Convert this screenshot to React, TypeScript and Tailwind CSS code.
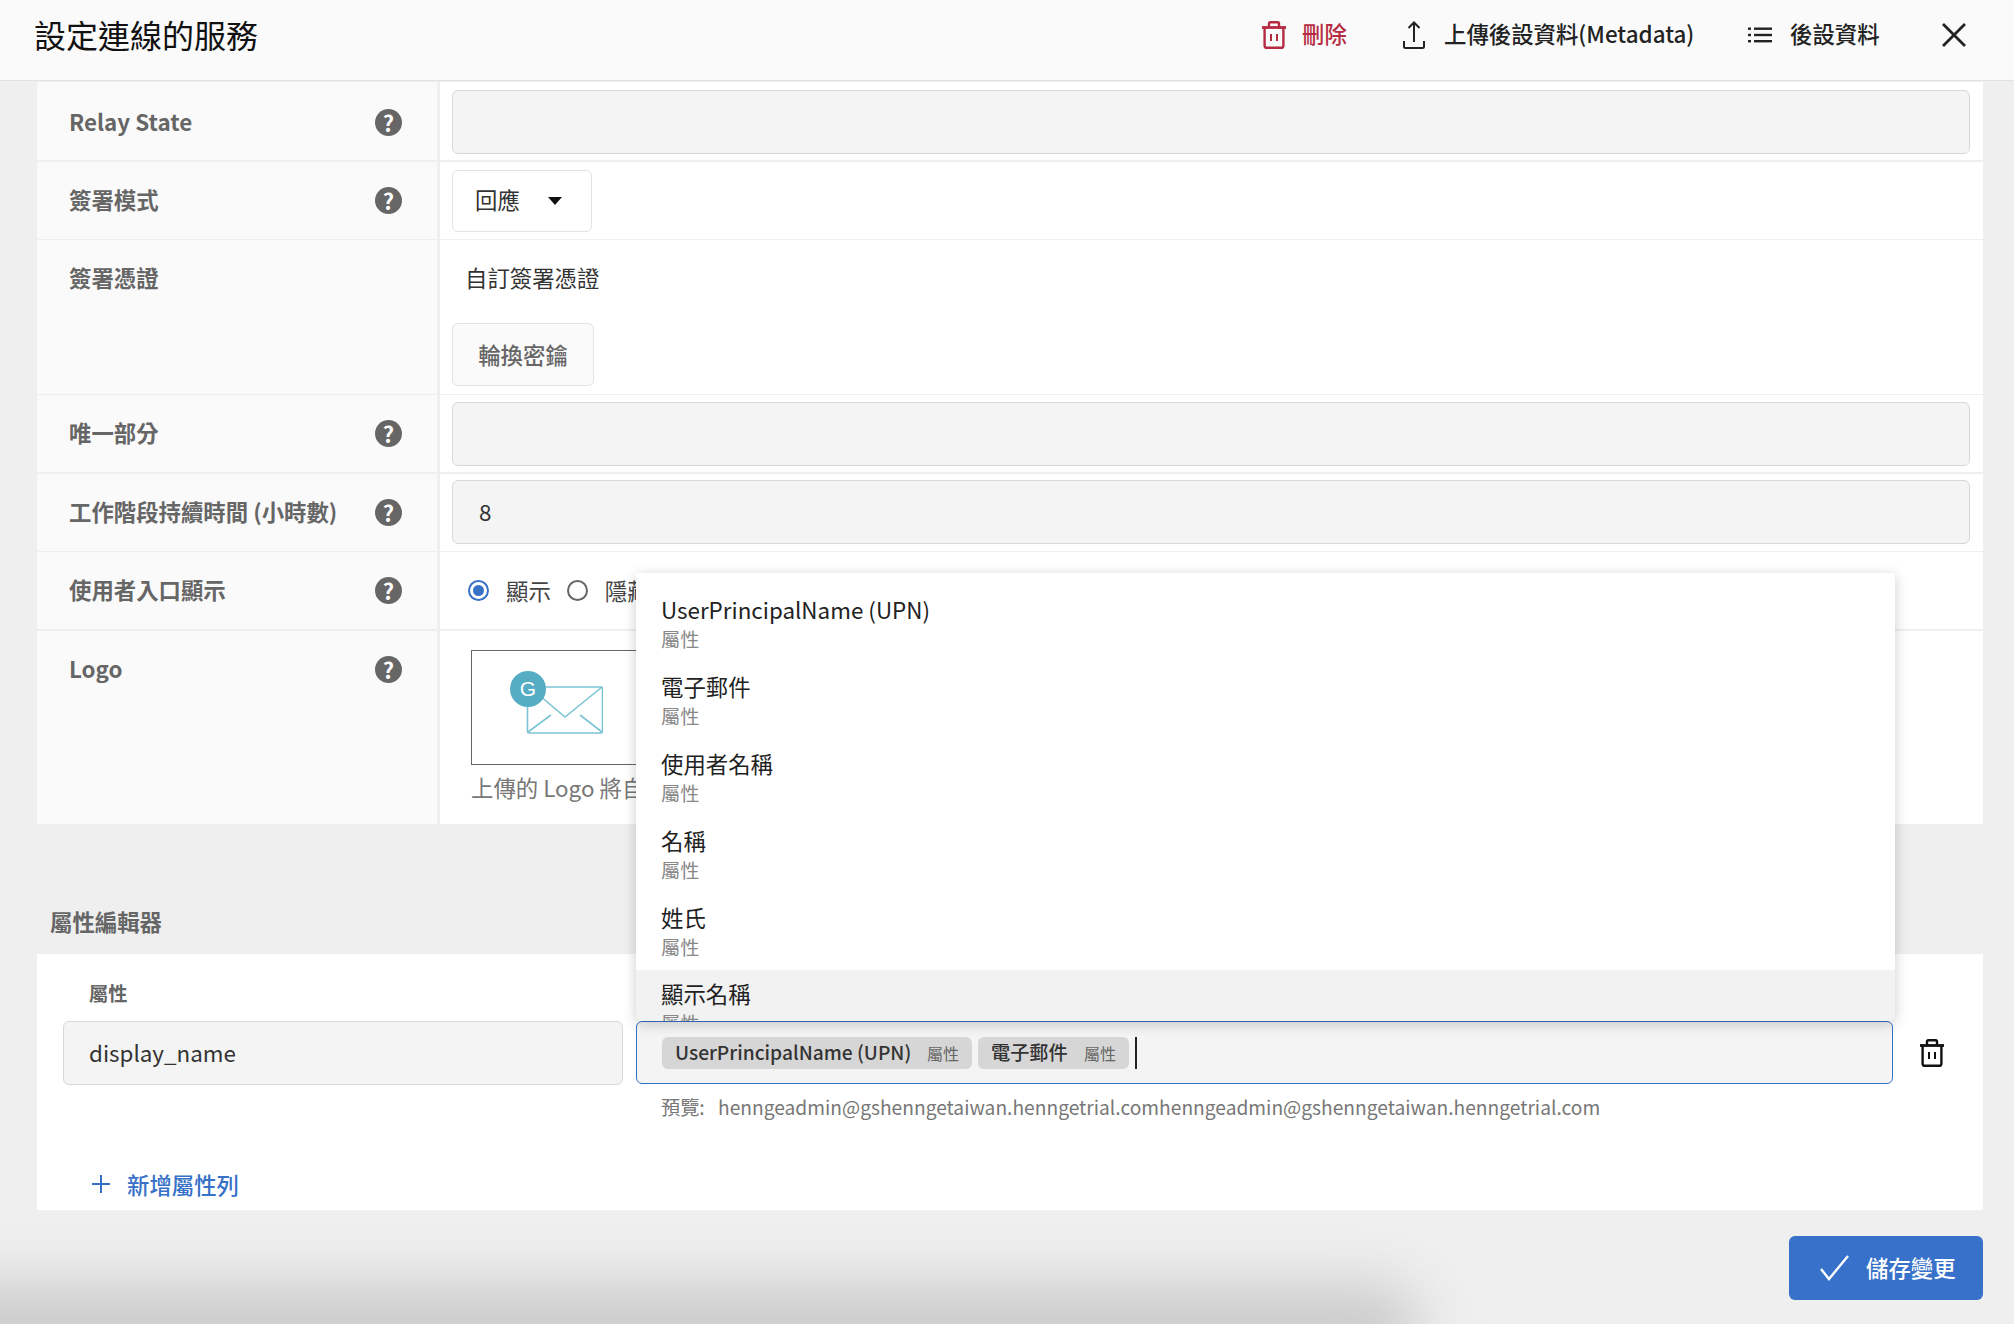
import { ReactNode } from 'react';

function TrashIcon({ className }: { className: string }) {
  return (
    <svg viewBox="0 0 26 28" fill="none" stroke="currentColor" strokeWidth="2.4" className={className}>
      <path d="M1 6.5h24" strokeWidth="2.8" />
      <path d="M8 6V2.6c0-.8.6-1.4 1.4-1.4h7.2c.8 0 1.4.6 1.4 1.4V6" />
      <path d="M3.6 7v17.4c0 1.3 1 2.4 2.4 2.4h14c1.4 0 2.4-1.1 2.4-2.4V7" />
      <path d="M10 13v7M16 13v7" strokeWidth="2" />
    </svg>
  );
}

function HelpIcon() {
  return (
    <span className="flex h-[27px] w-[27px] items-center justify-center rounded-full bg-[#666666] text-[22px] leading-none font-bold text-white">
      ?
    </span>
  );
}

function Label({ text, help = true }: { text: string; help?: boolean }) {
  return (
    <div className="flex h-[76px] items-center justify-between pr-[35px] pl-[32px]">
      <span className="text-[22.4px] font-bold whitespace-nowrap text-[#666666]">{text}</span>
      {help && <HelpIcon />}
    </div>
  );
}

function Row({ label, help, height, gap, top, first, children }: { label: string; help?: boolean; height: string; gap: string; top?: boolean; first?: boolean; children: ReactNode }) {
  return (
    <div className={`flex ${height} ${gap}`}>
      <div className={`w-[400px] shrink-0 bg-[#fafafa] ${first ? 'pt-[2px]' : ''}`}>
        <Label text={label} help={help} />
      </div>
      <div className={`ml-[3px] flex flex-1 bg-white pr-[13px] pl-[12px] ${top ? 'flex-col' : 'items-center'}`}>{children}</div>
    </div>
  );
}

function TextBox({ value }: { value?: string }) {
  return (
    <div className="flex h-[64px] w-full items-center rounded-[6px] border border-[#d8d8d8] bg-[#f4f4f4] pl-[26px] text-[22.4px] text-[#333333]">
      {value}
    </div>
  );
}

function Option({ name, active }: { name: string; active?: boolean }) {
  return (
    <div className={`h-[76.9px] shrink-0 pt-[9px] pl-[25px] ${active ? 'bg-[#f2f2f2]' : ''}`}>
      <div className="text-[22.4px] leading-[28px] text-[#222222]">{name}</div>
      <div className="mt-[2px] text-[19.2px] leading-[28px] text-[#888888]">屬性</div>
    </div>
  );
}

function Chip({ name, width }: { name: string; width: string }) {
  return (
    <div className={`flex h-[32px] items-center justify-between rounded-[6px] bg-[#d6d6d6] px-[13px] ${width}`}>
      <span className="text-[19.2px] font-medium whitespace-nowrap text-[#333333]">{name}</span>
      <span className="text-[16px] whitespace-nowrap text-[#666666]">屬性</span>
    </div>
  );
}

export default function App() {
  return (
    <div className="relative flex h-[1324px] w-[2014px] flex-col overflow-hidden bg-[#efefef] font-['Noto_Sans_CJK_TC','Noto_Sans',sans-serif]">
      {/* shadow from the window behind, bottom of the page */}
      <div className="absolute bottom-[-50px] left-[-120px] h-[90px] w-[1540px] rounded-full bg-[#cbcbcb] blur-[28px]"></div>

      <header className="z-10 flex h-[81px] shrink-0 items-center border-b border-[#e2e2e2] bg-[#fafafa] pb-[10px] pl-[34px]">
        <h1 className="w-[1227px] pb-[2px] text-[32px] leading-none font-normal text-[#111111]">設定連線的服務</h1>
        <div className="flex w-[142px] items-center text-[#b52b42]">
          <TrashIcon className="h-[28px] w-[26px]" />
          <span className="ml-[15px] pb-[2px] text-[22.4px] font-medium">刪除</span>
        </div>
        <div className="flex w-[345px] items-center text-[#222222]">
          <svg viewBox="0 0 22 28" fill="none" stroke="currentColor" strokeWidth="2" className="h-[28px] w-[22px]">
            <path d="M11 21V1.5M5.5 7 11 1.5 16.5 7" />
            <path d="M1 20v5.5c0 .8.7 1.5 1.5 1.5h17c.8 0 1.5-.7 1.5-1.5V20" />
          </svg>
          <span className="ml-[19px] pb-[2px] text-[22.4px] font-medium whitespace-nowrap">上傳後設資料(Metadata)</span>
        </div>
        <div className="flex w-[194px] items-center text-[#222222]">
          <svg viewBox="0 0 24 16" fill="currentColor" className="h-[16px] w-[24px]">
            <rect x="0" y="0.5" width="3" height="2.4" />
            <rect x="0" y="6.8" width="3" height="2.4" />
            <rect x="0" y="13" width="3" height="2.4" />
            <rect x="6" y="0.5" width="18" height="2.4" />
            <rect x="6" y="6.8" width="18" height="2.4" />
            <rect x="6" y="13" width="18" height="2.4" />
          </svg>
          <span className="ml-[18px] pb-[2px] text-[22.4px] font-medium whitespace-nowrap">後設資料</span>
        </div>
        <svg viewBox="0 0 24 24" fill="none" stroke="#222222" strokeWidth="2.8" className="h-[24px] w-[24px]">
          <path d="M1 1l22 22M23 1 1 23" />
        </svg>
      </header>

      <main className="flex flex-1 flex-col pt-px pr-[31px] pl-[37px]">
        <Row label="Relay State" height="h-[78px]" gap="mb-[2px]" first>
          <div className="mt-[2px] w-full">
            <TextBox />
          </div>
        </Row>
        <Row label="簽署模式" height="h-[77px]" gap="mb-px">
          <div className="flex h-[62px] w-[140px] items-center rounded-[6px] border border-[#e2e2e2] bg-white pb-[2px] pl-[22px]">
            <span className="text-[22.4px] text-[#333333]">回應</span>
            <span className="mt-[2px] ml-[28px] h-0 w-0 border-x-[7px] border-t-[8px] border-x-transparent border-t-[#111111]"></span>
          </div>
        </Row>
        <Row label="簽署憑證" help={false} height="h-[154px]" gap="mb-px" top>
          <div className="flex h-[76px] items-center pl-[13px] text-[22.4px] text-[#333333]">自訂簽署憑證</div>
          <div className="mt-[7px] flex h-[63px] w-[142px] items-center justify-center rounded-[6px] border border-[#e2e2e2] bg-[#fafafa] text-[22.4px] font-medium text-[#666666]">
            輪換密鑰
          </div>
        </Row>
        <Row label="唯一部分" height="h-[77px]" gap="mb-[2px]">
          <TextBox />
        </Row>
        <Row label="工作階段持續時間 (小時數)" height="h-[77px]" gap="mb-px">
          <div className="-mt-px w-full">
            <TextBox value="8" />
          </div>
        </Row>
        <Row label="使用者入口顯示" height="h-[77px]" gap="mb-[2px]">
          <div className="flex items-center pl-[16px] text-[22.4px] text-[#444444]">
            <span className="flex h-[21px] w-[21px] items-center justify-center rounded-full border-2 border-[#3771c8]">
              <span className="h-[11px] w-[11px] rounded-full bg-[#3771c8]"></span>
            </span>
            <span className="ml-[17px]">顯示</span>
            <span className="ml-[16px] h-[21px] w-[21px] rounded-full border-2 border-[#666666]"></span>
            <span className="ml-[17px]">隱藏</span>
          </div>
        </Row>
        <Row label="Logo" height="h-[193px]" gap="mb-0" top>
          <div className="mt-[19px] ml-[19px] flex h-[115px] w-[300px] border border-[#666666]">
            <svg viewBox="0 0 94 64" fill="none" className="mt-[19px] ml-[37px] h-[64px] w-[94px]">
              <rect x="18.5" y="17" width="75" height="46" rx="1.5" stroke="#7cc4d4" strokeWidth="1.6" />
              <path d="M30 25 56 47 93 17M19 62l23-17M93 62 71 45" stroke="#7cc4d4" strokeWidth="1.6" />
              <circle cx="19" cy="19" r="18" fill="#55adc4" />
              <text x="19" y="26" textAnchor="middle" fontSize="21" fill="#ffffff" fontFamily="'Liberation Sans', sans-serif">G</text>
            </svg>
          </div>
          <div className="mt-[6px] ml-[19px] text-[22.4px] whitespace-nowrap text-[#777777]">上傳的 Logo 將自動調整大小</div>
        </Row>

        <h2 className="mt-[81px] ml-[13px] h-[49px] text-[22.4px] leading-[32px] font-bold text-[#666666]">屬性編輯器</h2>
        <section className="h-[256px] bg-white pt-[25px] pl-[26px]">
          <div className="pl-[26px] text-[19.2px] leading-[28px] font-bold text-[#666666]">屬性</div>
          <div className="mt-[14px] flex items-start">
            <div className="flex h-[64px] w-[560px] items-center rounded-[6px] border border-[#d8d8d8] bg-[#f4f4f4] pl-[25px] text-[22.4px] text-[#333333]">
              display_name
            </div>
            <div className="ml-[13px] w-[1257px]">
              <div className="flex h-[63px] items-center rounded-[6px] border border-[#3771c8] bg-[#f4f4f4] pl-[25px]">
                <Chip name="UserPrincipalName (UPN)" width="w-[310px]" />
                <div className="ml-[6px]">
                  <Chip name="電子郵件" width="w-[151px]" />
                </div>
                <span className="ml-[6px] h-[32px] w-[2px] bg-[#222222]"></span>
              </div>
              <div className="mt-[9px] flex pl-[25px] text-[19.2px] leading-[28px] whitespace-nowrap text-[#777777]">
                <span className="w-[57px]">預覽:</span>
                <span>henngeadmin@gshenngetaiwan.henngetrial.comhenngeadmin@gshenngetaiwan.henngetrial.com</span>
              </div>
            </div>
            <TrashIcon className="mt-[18px] ml-[26px] h-[28px] w-[26px] text-[#111111]" />
          </div>
          <div className="mt-[49px] flex items-center pl-[29px] text-[#3771c8]">
            <svg viewBox="0 0 18 18" stroke="currentColor" strokeWidth="2" className="h-[18px] w-[18px]">
              <path d="M9 0v18M0 9h18" />
            </svg>
            <span className="ml-[17px] text-[22.4px] leading-[28px] font-medium">新增屬性列</span>
          </div>
        </section>
        <div className="mt-[26px] flex justify-end">
          <button className="z-10 flex h-[64px] w-[194px] items-center rounded-[6px] bg-[#3871c9] pl-[31px] text-white">
            <svg viewBox="0 0 30 26" fill="none" stroke="currentColor" strokeWidth="2.4" className="h-[26px] w-[30px]">
              <path d="M1 14l8 10L28 1" />
            </svg>
            <span className="ml-[16px] text-[22.4px] font-medium">儲存變更</span>
          </button>
        </div>
      </main>

      {/* open dropdown of the attribute picker */}
      <div className="absolute top-[573px] left-[636px] z-20 flex h-[448px] w-[1259px] flex-col overflow-hidden rounded-b-[6px] bg-white pt-[13px] shadow-[0_3px_14px_rgba(0,0,0,0.2)]">
        <Option name="UserPrincipalName (UPN)" />
        <Option name="電子郵件" />
        <Option name="使用者名稱" />
        <Option name="名稱" />
        <Option name="姓氏" />
        <Option name="顯示名稱" active />
      </div>
    </div>
  );
}
